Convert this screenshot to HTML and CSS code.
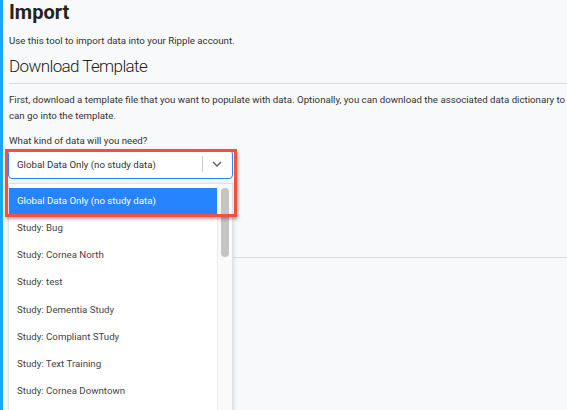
FILE: index.html
```html
<!DOCTYPE html>
<html lang="en">
<head>
  <meta charset="UTF-8">
  <title>Import</title>
  <link rel="stylesheet" href="styles.css">
</head>
<body>
  <main class="page">
    <h1>Import</h1>
    <p class="intro">Use this tool to import data into your Ripple account.</p>

    <h2>Download Template</h2>
    <hr>

    <p class="help">First, download a template file that you want to populate with data. Optionally, you can download the associated data dictionary to see what can go into the template.</p>

    <label class="field-label">What kind of data will you need?</label>

    <div class="picker">
      <div class="select">
        <span class="select-value">Global Data Only (no study data)</span>
        <span class="select-divider"></span>
        <svg class="chevron" width="10" height="6" viewBox="0 0 10 6">
          <path d="M1 1l4 4 4-4" fill="none" stroke="#666" stroke-width="1.5"/>
        </svg>
      </div>

      <div class="menu">
        <ul class="options">
          <li class="selected">Global Data Only (no study data)</li>
          <li>Study: Bug</li>
          <li>Study: Cornea North</li>
          <li>Study: test</li>
          <li>Study: Dementia Study</li>
          <li>Study: Compliant STudy</li>
          <li>Study: Text Training</li>
          <li>Study: Cornea Downtown</li>
          <li>Study: Retina West</li>
        </ul>
        <div class="scroll-track"><div class="scroll-thumb"></div></div>
      </div>

      <!-- annotation box drawn over the select -->
      <div class="callout"></div>
    </div>

    <hr class="section-rule">
  </main>
</body>
</html>
```

FILE: styles.css
```css
html, body {
  overflow: hidden;
}

body {
  margin: 0;
  height: 410px;
  background: #f8f9fa;
  border-left: 3px solid #14a9f0;
  font-family: Roboto, "Open Sans", sans-serif;
  color: #333;
}

.page {
  width: 606px;
  padding-left: 6px;
}

h1 {
  margin: 0;
  font-size: 20px;
  line-height: 25px;
  font-weight: 700;
  color: #222;
}

.intro {
  margin: 8px 0 0;
  font-size: 9.7px;
  line-height: 16px;
}

h2 {
  margin: 6px 0 0;
  font-size: 17px;
  line-height: 22px;
  font-weight: 300;
  letter-spacing: -0.6px;
  color: #222;
}

hr {
  border: none;
  border-top: 1px solid #dcdcdc;
  margin: 6px 0 0;
}

.help {
  margin: 8px 0 0;
  font-size: 9.7px;
  line-height: 15.5px;
}

.field-label {
  display: block;
  margin-top: 10px;
  font-size: 9.7px;
  line-height: 15.5px;
}

.picker {
  position: relative;
  width: 225px;
  margin: 1px 0 0 -1px;
}

.select {
  display: flex;
  align-items: center;
  height: 29px;
  box-sizing: border-box;
  background: #fff;
  border: 1px solid #2684ff;
  border-radius: 4px;
  padding: 0 10px 0 8px;
  font-size: 9.7px;
}

.select-value {
  flex: 1;
}

.select-divider {
  width: 1px;
  height: 16px;
  background: #ccc;
  margin-right: 9px;
}

.menu {
  position: absolute;
  top: 33px;
  left: 0;
  width: 225px;
  height: 260px;
  display: flex;
  background: #fff;
  border: 1px solid #e2e2e2;
  box-sizing: border-box;
  box-shadow: 1px 1px 4px rgba(0,0,0,0.12);
}

.options {
  flex: 1;
  list-style: none;
  margin: 0;
  padding: 4px 0 0;
  font-size: 9.7px;
  color: #444;
}

.options li {
  height: 27.3px;
  display: flex;
  align-items: center;
  padding-left: 8px;
}

.options li.selected {
  height: 26px;
  background: #2684ff;
  color: #fff;
}

.scroll-track {
  width: 14px;
  border-left: 1px solid #ececec;
  background: #fafafa;
}

.scroll-thumb {
  width: 8px;
  height: 69px;
  margin: 4px 0 0 3px;
  border-radius: 4px;
  background: #c4c4c4;
}

.callout {
  position: absolute;
  top: -1px;
  left: -3px;
  width: 232px;
  height: 68px;
  box-sizing: border-box;
  border: 3px solid #f2513f;
  box-shadow: 1px 2px 3px rgba(0,0,0,0.35);
}

.section-rule {
  margin-top: 78px;
}
```
